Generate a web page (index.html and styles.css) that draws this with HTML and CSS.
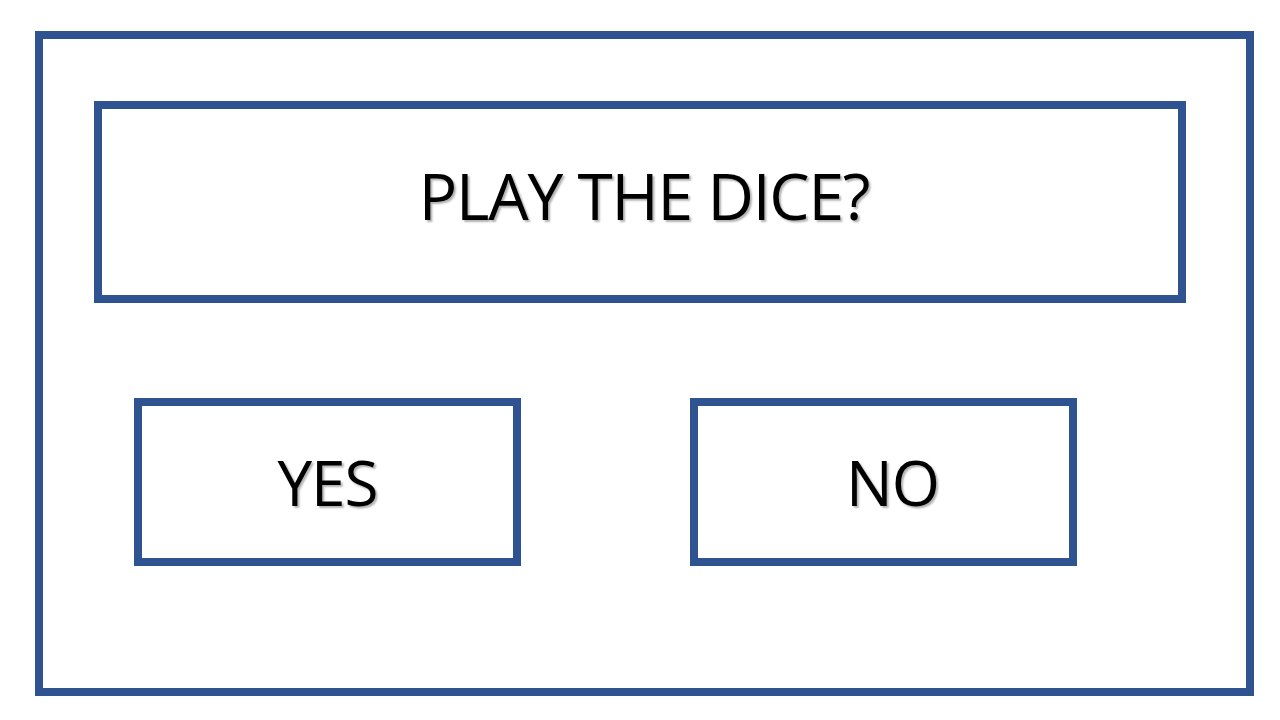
FILE: index.html
```html
<!DOCTYPE html>
<html>
<head>
<meta charset="utf-8">
<link rel="stylesheet" href="styles.css">
</head>
<body>
<div class="frame">
  <div class="title-box"><span class="title">PLAY THE DICE?</span></div>
  <div class="buttons">
    <div class="btn"><span class="btn-label">YES</span></div>
    <div class="btn btn-no"><span class="btn-label">NO</span></div>
  </div>
</div>
</body>
</html>
```
FILE: styles.css
```css
html, body {
  margin: 0;
  padding: 0;
  background: #ffffff;
}
body {
  width: 1280px;
  height: 720px;
  padding: 31px 0 0 35px;
  box-sizing: border-box;
  font-family: "Open Sans", "Noto Sans", sans-serif;
  color: #000;
}
.frame {
  box-sizing: border-box;
  width: 1219px;
  height: 665px;
  border: 8px solid #2f5290;
  padding: 62px 0 0 51px;
  display: flex;
  flex-direction: column;
}
.title-box {
  box-sizing: border-box;
  width: 1092px;
  height: 202px;
  border: 8px solid #2f5290;
  padding: 0 0 12px 8px;
  display: flex;
  align-items: center;
  justify-content: center;
}
.title {
  font-size: 64px;
  line-height: 1;
  letter-spacing: -1.2px;
  text-shadow: 2px 2px 2px rgba(0,0,0,0.3);
}
.buttons {
  display: flex;
  gap: 169px;
  margin-top: 95px;
  padding-left: 40px;
}
.btn {
  box-sizing: border-box;
  width: 387px;
  height: 168px;
  border: 8px solid #2f5290;
  display: flex;
  align-items: center;
  justify-content: center;
}
.btn-no {
  padding-left: 18px;
}
.btn-label {
  font-size: 62px;
  line-height: 1;
  letter-spacing: -1px;
  text-shadow: 2px 2px 2px rgba(0,0,0,0.3);
}
```
